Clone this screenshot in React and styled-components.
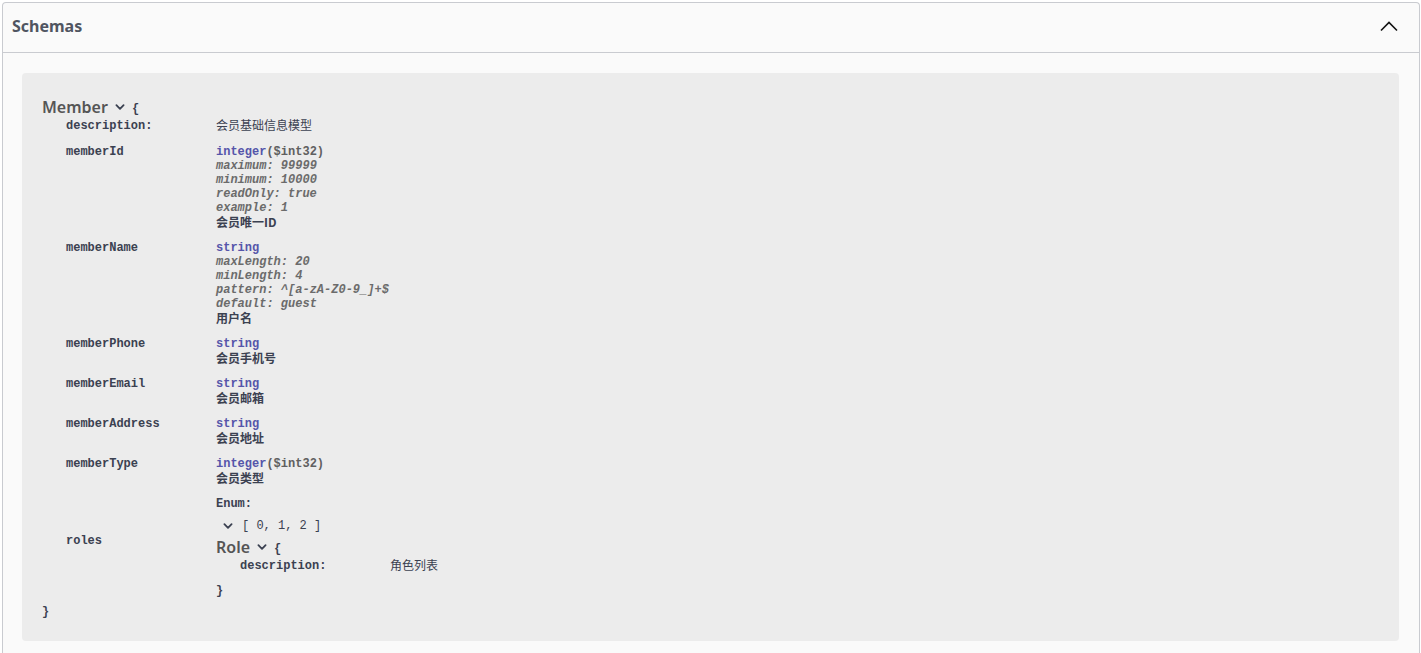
import React from 'react';
import styled, { createGlobalStyle } from 'styled-components';

const GlobalStyle = createGlobalStyle`
  html, body {
    margin: 0;
    padding: 0;
    background: #fff;
  }
  body {
    font-family: "Noto Sans", "Noto Sans CJK SC", sans-serif;
    color: #3b4151;
  }
`;

const MONO = '"Liberation Mono", "Noto Sans CJK SC", monospace';

const Section = styled.section`
  margin: 2px 1px 0 2px;
  border: 1px solid #c9cbd0;
  border-bottom: none;
  border-radius: 4px 4px 0 0;
  background: #fafafa;
  padding-bottom: 12px;
`;

const Header = styled.h4`
  margin: 0;
  display: flex;
  align-items: center;
  justify-content: space-between;
  padding: 0 20px 3px 9px;
  box-sizing: border-box;
  height: 50px;
  border-bottom: 1px solid #c9cbd0;
  font-family: "Noto Sans", sans-serif;
  font-size: 16px;
  font-weight: 700;
  color: #505561;
`;

const ModelContainer = styled.div`
  margin: 20px 20px 0 19px;
  background: #ececec;
  border-radius: 4px;
  padding: 22px 20px 22px 20px;
  font-family: ${MONO};
  font-size: 12px;
  font-weight: 700;
  line-height: 14px;
  color: #3b4151;
`;

const TitleRow = styled.div`
  display: flex;
  align-items: center;
  height: 24px;
  margin-top: ${(p) => p.$mt || 0}px;
`;

const ModelTitle = styled.span`
  font-family: "Noto Sans", sans-serif;
  font-size: 16px;
  font-weight: 600;
  color: #555;
  line-height: 24px;
`;

const Brace = styled.span`
  font-family: ${MONO};
  font-size: 12px;
  font-weight: 700;
  color: #3b4151;
  padding-top: 3px;
`;

const Props = styled.div`
  padding-left: 24px;
`;

const Row = styled.div`
  display: grid;
  grid-template-columns: 150px 1fr;
  padding-bottom: ${(p) => p.$pb ?? 12}px;
`;

const Key = styled.div`
  white-space: nowrap;
  padding-top: ${(p) => p.$pt || 0}px;
`;

const Value = styled.div`
  display: flex;
  flex-direction: column;
  align-items: flex-start;
`;

const DescText = styled.span`
  font-family: "Noto Sans", "Noto Sans CJK SC", sans-serif;
  font-weight: 400;
  font-size: 12px;
  color: #3b4151;
`;

const TypeLine = styled.span`
  white-space: nowrap;
`;

const TypeName = styled.span`
  color: #55a;
`;

const Format = styled.span`
  color: #606060;
`;

const Extra = styled.span`
  font-style: italic;
  color: #6b6b6b;
  white-space: nowrap;
`;

const Note = styled.span`
  font-family: "Noto Sans CJK SC", sans-serif;
  font-size: 12px;
  font-weight: 700;
  color: #3b4151;
`;

const EnumLabel = styled.span`
  margin-top: 12px;
`;

const EnumList = styled.div`
  margin-top: 8px;
  display: flex;
  align-items: center;
  gap: 2px;
  font-weight: 400;
  color: #3b4151;
  white-space: pre;
`;

const Closing = styled.div`
  padding-top: ${(p) => p.$pt || 0}px;
`;

const Chevron = ({ size = 10, stroke = 2 }) => (
  <svg width={size} height={size} viewBox="0 0 20 20" style={{ margin: '0 6px' }}>
    <path
      d="M4 7 L10 13 L16 7"
      fill="none"
      stroke="#3b4151"
      strokeWidth={stroke}
      strokeLinecap="round"
      strokeLinejoin="round"
    />
  </svg>
);

const HeaderIcon = styled.svg`
  width: 20px;
  height: 20px;
`;

const Model = ({ name, mt, children }) => (
  <>
    <TitleRow $mt={mt}>
      <ModelTitle>{name}</ModelTitle>
      <Chevron size={12} stroke={3} />
      <Brace>{'{'}</Brace>
    </TitleRow>
    {children}
  </>
);

const memberProps = [
  {
    key: 'memberId',
    type: 'integer',
    format: '($int32)',
    extras: [
      ['maximum', '99999'],
      ['minimum', '10000'],
      ['readOnly', 'true'],
      ['example', '1'],
    ],
    note: '会员唯一ID',
  },
  {
    key: 'memberName',
    type: 'string',
    extras: [
      ['maxLength', '20'],
      ['minLength', '4'],
      ['pattern', '^[a-zA-Z0-9_]+$'],
      ['default', 'guest'],
    ],
    note: '用户名',
  },
  { key: 'memberPhone', type: 'string', note: '会员手机号' },
  { key: 'memberEmail', type: 'string', note: '会员邮箱' },
  { key: 'memberAddress', type: 'string', note: '会员地址' },
];

export default function App() {
  return (
    <>
      <GlobalStyle />
      <Section>
        <Header>
          Schemas
          <HeaderIcon viewBox="0 0 20 20">
            <path d="M2 14.5 L10 6.5 L18 14.5" fill="none" stroke="#111" strokeWidth="1.6" />
          </HeaderIcon>
        </Header>

        <ModelContainer>
          <Model name="Member">
            <Props>
              <Row>
                <Key>description:</Key>
                <Value>
                  <DescText>会员基础信息模型</DescText>
                </Value>
              </Row>

              {memberProps.map((p) => (
                <Row key={p.key}>
                  <Key>{p.key}</Key>
                  <Value>
                    <TypeLine>
                      <TypeName>{p.type}</TypeName>
                      {p.format && <Format>{p.format}</Format>}
                    </TypeLine>
                    {(p.extras || []).map(([k, v]) => (
                      <Extra key={k}>{k}: {v}</Extra>
                    ))}
                    <Note>{p.note}</Note>
                  </Value>
                </Row>
              ))}

              <Row $pb={0}>
                <Key>memberType</Key>
                <Value>
                  <TypeLine>
                    <TypeName>integer</TypeName>
                    <Format>($int32)</Format>
                  </TypeLine>
                  <Note>会员类型</Note>
                  <EnumLabel>Enum:</EnumLabel>
                  <EnumList>
                    <Chevron size={12} stroke={3} />
                    <span>[ 0, 1, 2 ]</span>
                  </EnumList>
                </Value>
              </Row>

              <Row $pb={7}>
                <Key $pt={1}>roles</Key>
                <Value>
                  <Model name="Role" mt={2}>
                    <Props>
                      <Row $pb={11}>
                        <Key>description:</Key>
                        <Value>
                          <DescText>角色列表</DescText>
                        </Value>
                      </Row>
                    </Props>
                  </Model>
                  <Closing>{'}'}</Closing>
                </Value>
              </Row>
            </Props>
          </Model>
          <Closing>{'}'}</Closing>
        </ModelContainer>
      </Section>
    </>
  );
}
